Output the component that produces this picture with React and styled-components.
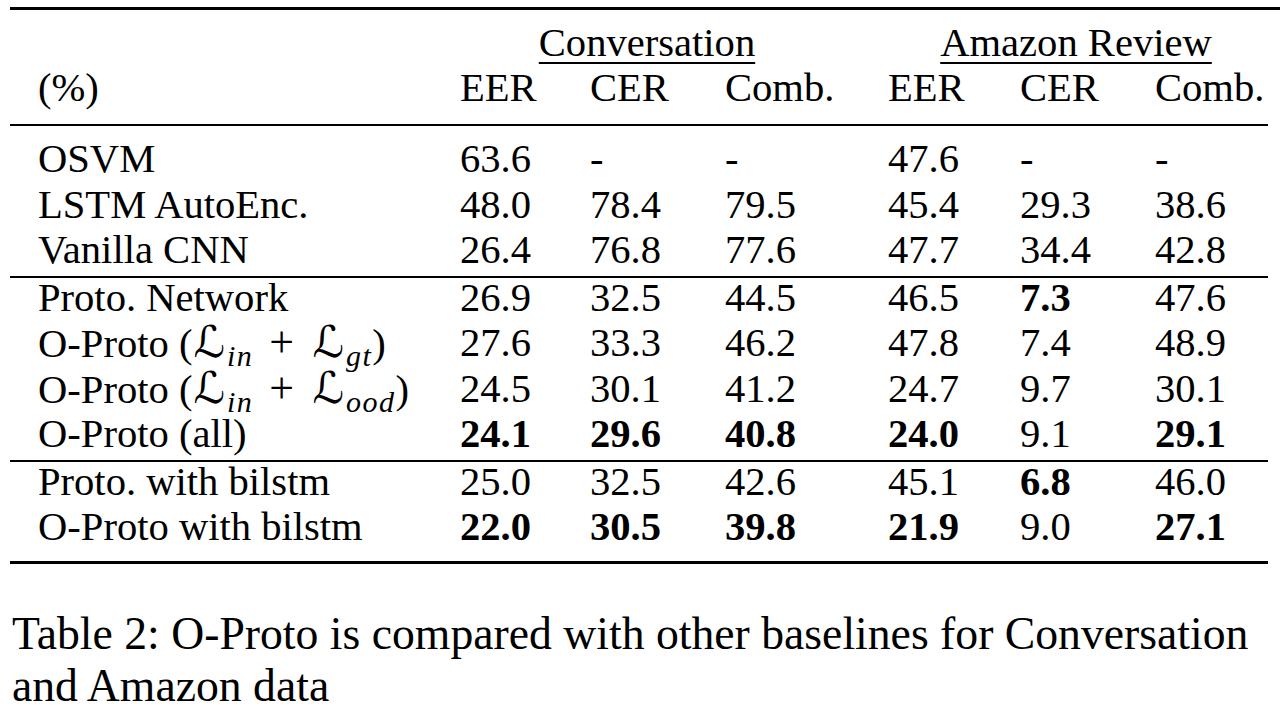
import React from 'react';
import styled, { createGlobalStyle } from 'styled-components';

const Global = createGlobalStyle`
  html, body { margin: 0; padding: 0; background: #fff; }
  body {
    font-family: "Liberation Serif", "Times New Roman", serif;
    color: #000;
  }
`;

const Page = styled.div`
  width: 1280px;
  height: 712px;
  overflow: hidden;
  box-sizing: border-box;
  padding: 7px 12px 0 10px;
`;

const Table = styled.div`
  font-size: 40.6px;
`;

const Rule = styled.div`
  height: ${(p) => p.$thick}px;
  background: #000;
  margin-top: ${(p) => p.$above || 0}px;
  margin-bottom: ${(p) => p.$below || 0}px;
  margin-right: ${(p) => (p.$bleed ? '-12px' : '0')};
`;

const Row = styled.div`
  display: grid;
  grid-template-columns: 422px 130px 135px 163px 132px 135px 1fr;
  padding-left: 28px;
  height: 45.5px;
  line-height: 39.5px;
  white-space: nowrap;
`;

const Label = styled.div``;

const Cell = styled.div`
  font-weight: ${(p) => (p.$bold ? 700 : 400)};
`;

const GroupHead = styled.div`
  grid-column: ${(p) => p.$span};
  text-align: center;
  padding-right: ${(p) => p.$trim}px;
`;

const GroupText = styled.span`
  text-decoration: underline;
  text-decoration-thickness: 1.5px;
  text-underline-offset: 6px;
`;

const Script = styled.span`
  font-family: "DejaVu Serif", "DejaVu Sans", serif;
  font-size: 1.08em;
  line-height: 0;
  margin: 0 2px 0 1px;
`;

const Sub = styled.span`
  font-style: italic;
  font-size: 0.74em;
  letter-spacing: 1.5px;
  vertical-align: -0.3em;
  line-height: 0;
`;

const Op = styled.span`
  font-size: 1.08em;
  margin: 0 0.4em 0 0.36em;
`;

const Caption = styled.p`
  margin: 44.6px 0 0 2px;
  font-size: 45.7px;
  line-height: 52px;
`;

const L = ({ sub }) => (
  <>
    <Script>ℒ</Script>
    <Sub>{sub}</Sub>
  </>
);

const sections = [
  [
    { label: 'OSVM', v: ['63.6', '-', '-', '47.6', '-', '-'] },
    { label: 'LSTM AutoEnc.', v: ['48.0', '78.4', '79.5', '45.4', '29.3', '38.6'] },
    { label: 'Vanilla CNN', v: ['26.4', '76.8', '77.6', '47.7', '34.4', '42.8'] },
  ],
  [
    { label: 'Proto. Network', v: ['26.9', '32.5', '44.5', '46.5', '7.3', '47.6'], b: [4] },
    {
      label: (
        <>
          O-Proto (<L sub="in" />
          <Op>+</Op>
          <L sub="gt" />)
        </>
      ),
      v: ['27.6', '33.3', '46.2', '47.8', '7.4', '48.9'],
    },
    {
      label: (
        <>
          O-Proto (<L sub="in" />
          <Op>+</Op>
          <L sub="ood" />)
        </>
      ),
      v: ['24.5', '30.1', '41.2', '24.7', '9.7', '30.1'],
    },
    { label: 'O-Proto (all)', v: ['24.1', '29.6', '40.8', '24.0', '9.1', '29.1'], b: [0, 1, 2, 3, 5] },
  ],
  [
    { label: 'Proto. with bilstm', v: ['25.0', '32.5', '42.6', '45.1', '6.8', '46.0'], b: [4] },
    { label: 'O-Proto with bilstm', v: ['22.0', '30.5', '39.8', '21.9', '9.0', '27.1'], b: [0, 1, 2, 3, 5] },
  ],
];

const heads = ['EER', 'CER', 'Comb.', 'EER', 'CER', 'Comb.'];

export default function App() {
  return (
    <>
      <Global />
      <Page>
        <Table>
          <Rule $thick={3} $bleed $below={12.5} />
          <Row>
            <Label />
            <GroupHead $span="2 / 5" $trim={54}>
              <GroupText>Conversation</GroupText>
            </GroupHead>
            <GroupHead $span="5 / 8" $trim={4}>
              <GroupText>Amazon Review</GroupText>
            </GroupHead>
          </Row>
          <Row>
            <Label>(%)</Label>
            {heads.map((h, i) => (
              <Cell key={i}>{h}</Cell>
            ))}
          </Row>
          <Rule $thick={2} $above={10} $below={13.5} />
          {sections.map((sec, si) => (
            <React.Fragment key={si}>
              {si > 0 && <Rule $thick={2} />}
              {sec.map((r, ri) => (
                <Row key={ri}>
                  <Label>{r.label}</Label>
                  {r.v.map((val, vi) => (
                    <Cell key={vi} $bold={r.b && r.b.includes(vi)}>
                      {val}
                    </Cell>
                  ))}
                </Row>
              ))}
            </React.Fragment>
          ))}
          <Rule $thick={3} $above={8} />
        </Table>
        <Caption>
          Table 2: O-Proto is compared with other baselines for Conversation and Amazon data
        </Caption>
      </Page>
    </>
  );
}
